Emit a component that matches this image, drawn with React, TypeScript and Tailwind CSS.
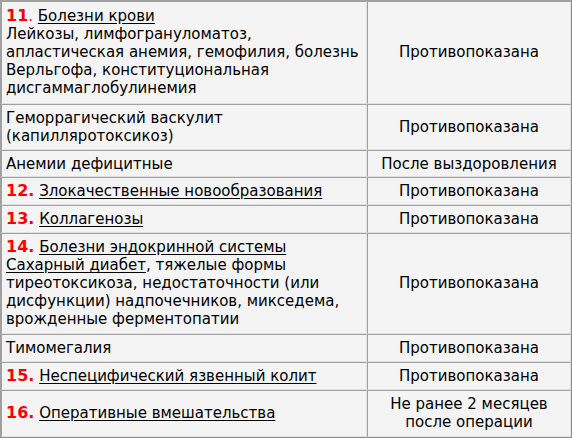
const num = (n: string) => (
  <span className="text-[16px] font-bold text-[#ff0000]">{n}.</span>
);

const link = (t: string) => <span className="underline underline-offset-2">{t}</span>;

const rows: { left: React.ReactNode; right: React.ReactNode; pad?: string }[] = [
  {
    left: (
      <>
        <span className="text-[16px] font-bold text-[#ff0000]">11</span>
        <span className="text-[#ff0000]">.</span> {link("Болезни крови")}
        <br />
        Лейкозы, лимфогрануломатоз,
        <br />
        апластическая анемия, гемофилия, болезнь
        <br />
        Верльгофа, конституциональная
        <br />
        дисгаммаглобулинемия
      </>
    ),
    right: "Противопоказана",
    pad: "pt-[5px] pb-[6px]",
  },
  {
    left: (
      <>
        Геморрагический васкулит
        <br />
        (капилляротоксикоз)
      </>
    ),
    right: "Противопоказана",
  },
  { left: "Анемии дефицитные", right: "После выздоровления", pad: "py-[3.5px]" },
  {
    left: (
      <>
        {num("12")} {link("Злокачественные новообразования")}
      </>
    ),
    right: "Противопоказана",
  },
  {
    left: (
      <>
        {num("13")} {link("Коллагенозы")}
      </>
    ),
    right: "Противопоказана",
  },
  {
    left: (
      <>
        {num("14")} {link("Болезни эндокринной системы")}
        <br />
        {link("Сахарный диабет")}, тяжелые формы
        <br />
        тиреотоксикоза, недостаточности (или
        <br />
        дисфункции) надпочечников, микседема,
        <br />
        врожденные ферментопатии
      </>
    ),
    right: "Противопоказана",
    pad: "pt-[4px] pb-[5px]",
  },
  { left: "Тимомегалия", right: "Противопоказана" },
  {
    left: (
      <>
        {num("15")} {link("Неспецифический язвенный колит")}
      </>
    ),
    right: "Противопоказана",
  },
  {
    left: (
      <>
        {num("16")} {link("Оперативные вмешательства")}
      </>
    ),
    right: (
      <>
        Не ранее 2 месяцев
        <br />
        после операции
      </>
    ),
    pad: "pt-[4px] pb-[5px]",
  },
];

const cell =
  "border border-t-[#a0a0a0] border-l-[#a0a0a0] border-b-[#e2e2e2] border-r-[#e2e2e2] bg-[#f4f4f4] px-[4px] align-middle";

export default function App() {
  return (
    <div className="w-[572px] bg-white font-['DejaVu_Sans',Verdana,sans-serif] text-[15px] leading-[18px] text-black">
      <table className="w-full border-separate border-spacing-0 border border-t-[#a0a0a0] border-l-[#a0a0a0] border-b-[#8c8c8c] border-r-[#8c8c8c]">
        <tbody>
          {rows.map((r, i) => (
            <tr key={i}>
              <td className={`${cell} w-[366px] whitespace-nowrap ${r.pad ?? "py-[4px]"}`}>
                {r.left}
              </td>
              <td className={`${cell} text-center ${r.pad ?? "py-[4px]"}`}>{r.right}</td>
            </tr>
          ))}
        </tbody>
      </table>
    </div>
  );
}
